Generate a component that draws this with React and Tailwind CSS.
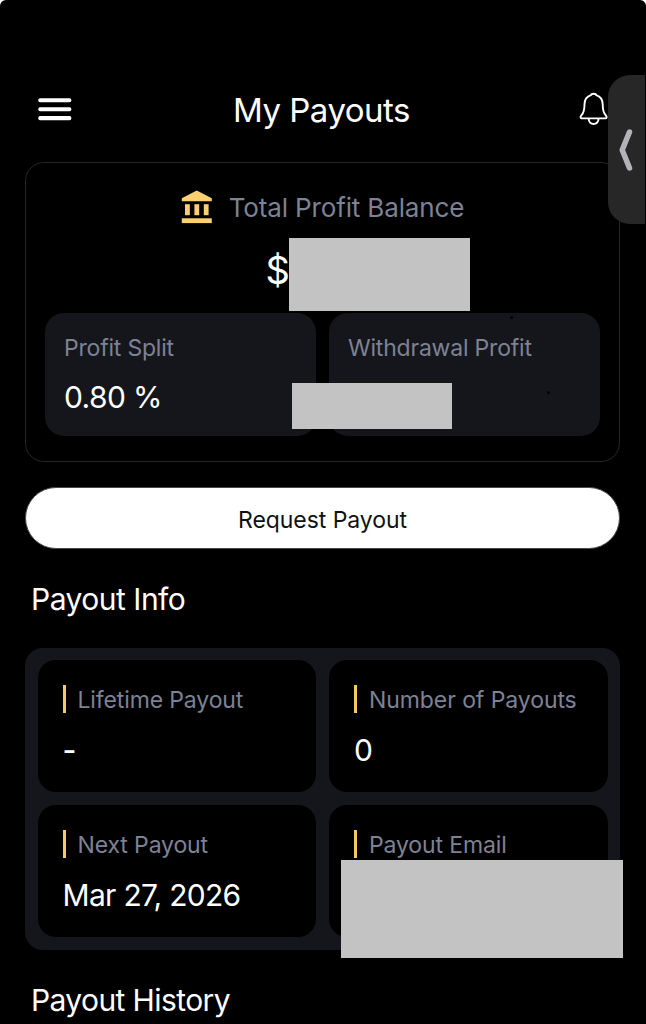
function MenuIcon() {
  return (
    <svg width="34" height="24" viewBox="0 0 34 24" fill="white">
      <rect x="0.3" y="0.2" width="33" height="4.1" rx="1.7" />
      <rect x="0.3" y="9.2" width="33" height="4.1" rx="1.7" />
      <rect x="0.3" y="18.1" width="33" height="4.1" rx="1.7" />
    </svg>
  );
}

function BellIcon() {
  return (
    <svg width="30" height="34" viewBox="0 0 30 34" fill="none" stroke="white" strokeWidth="1.9" strokeLinejoin="round" strokeLinecap="round">
      <path d="M12 3.2C12.2 1.2 17 1.2 17.200 3.200C21.500 4.500 23.700 7.700 23.700 12.500C23.700 18.500 24.200 20.800 26.800 23.300C28.300 25 27.700 26.400 26.200 26.400H3C1.500 26.400 0.900 25 2.400 23.300C5 20.800 5.500 18.500 5.500 12.500C5.500 7.700 7.700 4.500 12 3.200Z" />
      <path d="M9.700 27C9.700 33.600 19.500 33.600 19.500 27" />
    </svg>
  );
}

function BankIcon() {
  return (
    <svg width="32" height="34" viewBox="0 0 32 34" fill="#fccf72">
      <path d="M0.800 8.300L15.800 0.400L30.800 8.300V11.200H0.800Z" />
      <rect x="4" y="14.200" width="4.800" height="11" />
      <rect x="13.400" y="14.200" width="4.800" height="11" />
      <rect x="22.800" y="14.200" width="4.800" height="11" />
      <rect x="0.800" y="28.300" width="30" height="4.800" />
    </svg>
  );
}

function InfoCell({ label, labelClass, children }) {
  return (
    <div className="h-[132px] rounded-[18px] bg-black pl-[25px] pt-[25px]">
      <div className="flex h-7 items-center gap-3">
        <div className="h-7 w-[3px] shrink-0 bg-[#f6c868]" />
        <div className={`whitespace-nowrap pt-[2px] text-[23px] leading-7 text-[#7d8295] ${labelClass}`}>{label}</div>
      </div>
      {children}
    </div>
  );
}

export default function App() {
  return (
    <div className="h-[1024px] w-[646px] overflow-hidden bg-white font-['Inter',sans-serif] text-white">
      <div className="relative h-full overflow-hidden rounded-t-[6px] bg-black px-[25px]">
        <header className="flex h-[162px] items-start justify-between pl-[13px] pr-[12px]">
          <button className="mt-[98px]"><MenuIcon /></button>
          <h1 className="mr-2 mt-[90px] whitespace-nowrap text-[33px] leading-10 tracking-[-0.5px]">My Payouts</h1>
          <button className="mt-[92px]"><BellIcon /></button>
        </header>

        <section className="h-[300px] w-[595px] rounded-[19px] border border-[#25262b] px-[19px] pt-[26px]">
          <div className="flex h-9 items-center justify-center gap-4">
            <BankIcon />
            <h2 className="whitespace-nowrap pt-[2px] text-[26px] leading-9 tracking-[-0.140px] text-[#7d8295]">Total Profit Balance</h2>
          </div>
          <div className="mt-[13px] flex h-[73px] pl-[220.500px]">
            <span className="w-[23px] pt-[7px] text-[38px] leading-[50px] tracking-[-1px]">$</span>
            <div className="w-[181px] bg-[#c3c3c3]" />
          </div>
          <div className="relative mt-[1.500px] grid grid-cols-2 gap-[13px]">
            <div className="h-[123px] rounded-[19px] bg-[#15161b] pl-[19px] pt-[21.500px]">
              <div className="whitespace-nowrap text-[23px] leading-7 tracking-[-0.2px] text-[#7d8295]">Profit Split</div>
              <div className="mt-[15px] whitespace-nowrap text-[30px] leading-10 tracking-[-0.6px]">0.80 %</div>
            </div>
            <div className="relative h-[123px] rounded-[19px] bg-[#15161b] pl-[19px] pt-[21.500px]">
              <div className="whitespace-nowrap text-[23px] leading-7 tracking-[-0.2px] text-[#7d8295]">Withdrawal Profit</div>
              <div className="absolute left-[181px] top-[3px] size-[3px] rounded-full bg-black" />
              <div className="absolute left-[218px] top-[78px] size-[3px] rounded-full bg-black" />
            </div>
            <div className="absolute left-[247px] top-[70px] h-[46px] w-[160px] bg-[#c3c3c3]" />
          </div>
        </section>

        <button className="mt-[25px] flex h-[62px] w-[595px] items-center justify-center rounded-full border border-[#4a4b50] bg-white pt-[4px] text-[23px] tracking-[-0.060px] text-[#111]">Request Payout</button>

        <h2 className="mt-[30px] whitespace-nowrap pl-[6px] text-[30px] leading-10 tracking-[-0.5px]"><span>Payout Info</span></h2>

        <section className="relative mt-[29px] h-[302px] w-[595px] rounded-[18px] bg-[#15161b] px-[12.500px] pt-[12px]">
          <div className="grid grid-cols-2 gap-[13px]">
            <InfoCell label="Lifetime Payout" labelClass="tracking-[-0.130px]">
              <div className="mt-[17px] text-[30px] font-medium leading-10"><span>-</span></div>
            </InfoCell>
            <InfoCell label="Number of Payouts" labelClass="tracking-[-0.080px]">
              <div className="mt-[17px] text-[30px] leading-10"><span>0</span></div>
            </InfoCell>
            <InfoCell label="Next Payout" labelClass="tracking-[-0.130px]">
              <div className="mt-[17px] whitespace-nowrap text-[30px] leading-10 tracking-[-0.7px]"><span>Mar 27, 2026</span></div>
            </InfoCell>
            <InfoCell label="Payout Email" labelClass="tracking-[-0.130px]" />
          </div>
          <div className="absolute left-[316px] top-[212px] h-[98px] w-[281.500px] bg-[#c3c3c3]" />
        </section>

        <h2 className="mt-[30px] whitespace-nowrap pl-[6px] text-[30px] leading-10 tracking-[-0.6px]"><span>Payout History</span></h2>

        <div className="absolute right-px top-[75px] flex h-[149px] w-[37px] items-center rounded-l-[22px] bg-[#272727] pl-[10px]">
          <svg width="16" height="44" viewBox="0 0 16 44" fill="none" stroke="#b4b3ba" strokeWidth="5.500" strokeLinecap="round" strokeLinejoin="round">
            <path d="M11.500 4L4.200 22L11.500 40" />
          </svg>
        </div>
      </div>
    </div>
  );
}
